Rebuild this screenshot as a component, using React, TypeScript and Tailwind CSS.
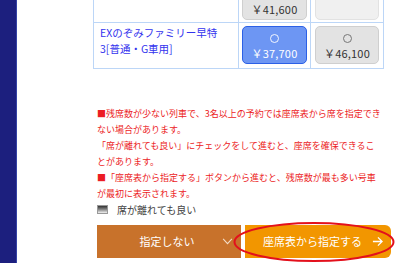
import type { ReactNode } from 'react'

function FareButton({
  price,
  variant,
}: {
  price?: string
  variant: 'selected' | 'normal' | 'empty'
}) {
  const tone =
    variant === 'selected'
      ? 'border-[#2b60e6] bg-[#6d96f3] text-white'
      : variant === 'normal'
        ? 'border-[#cfcfcf] bg-[#e3e3e3] text-[#333]'
        : 'border-[#e2e2e2] bg-[#f0f0f0] text-[#333]'

  return (
    <div
      className={`flex h-[38px] flex-col items-center justify-end rounded-[5px] border pb-[3px] ${tone}`}
    >
      {variant !== 'empty' && (
        <>
          <span
            className={`mb-[3px] h-[9px] w-[9px] rounded-full border ${
              variant === 'selected'
                ? 'border-white/90'
                : 'border-[#777]'
            }`}
          />
          <span className="text-[11px] leading-[14px] tracking-[0.2px]">
            {price}
          </span>
        </>
      )}
    </div>
  )
}

function Cell({
  children,
  className = '',
}: {
  children?: ReactNode
  className?: string
}) {
  return (
    <div
      className={`border-r border-b border-[#bcd6f7] ${className}`}
    >
      {children}
    </div>
  )
}

export default function App() {
  return (
    <div className="flex h-[263px] w-[400px] overflow-hidden bg-white font-['Noto_Sans_CJK_JP',sans-serif]">
      <aside className="w-[17px] shrink-0 border-r border-[#3543a6] bg-[#1c1f7e]" />

      <main className="flex flex-1 flex-col">
        <div className="ml-[76px] mt-[-23px] grid w-[290px] grid-cols-[145px_72px_73px] border-t border-l border-[#bcd6f7]">
          <Cell className="h-[45px]" />
          <Cell className="h-[45px] px-[3px] pt-[4px]">
            <FareButton variant="normal" price="￥41,600" />
          </Cell>
          <Cell className="h-[45px] px-[4px] pt-[4px]">
            <FareButton variant="empty" />
          </Cell>

          <Cell className="h-[46px] pl-[6px] pt-[2px] text-[10.5px] leading-4 text-[#3333ee]">
            <p>EXのぞみファミリー早特</p>
            <p>3[普通・G車用]</p>
          </Cell>
          <Cell className="h-[46px] px-[3px] pt-[3px]">
            <FareButton variant="selected" price="￥37,700" />
          </Cell>
          <Cell className="h-[46px] px-[4px] pt-[3px]">
            <FareButton variant="normal" price="￥46,100" />
          </Cell>
        </div>

        <div className="ml-[80px] mt-[37px] w-[286px] text-[9px] leading-4 text-[#ec1c24]">
          <p>■残席数が少ない列車で、3名以上の予約では座席表から席を指定できない場合があります。</p>
          <p>「席が離れても良い」にチェックをして進むと、座席を確保できることがあります。</p>
          <p>■「座席表から指定する」ボタンから進むと、残席数が最も多い号車が最初に表示されます。</p>
        </div>

        <label className="ml-[80px] mt-[1px] flex h-[12px] items-center gap-[9px] text-[10px] text-[#444]">
          <span className="h-[9px] w-[11px] border border-[#999] bg-gradient-to-b from-[#333] via-[#888] to-[#f2f2f2]" />
          席が離れても良い
        </label>

        <div className="relative ml-[80px] mt-[10px] flex h-[33px] w-[294px] gap-[4px]">
          <button
            type="button"
            className="relative flex w-[144px] items-center justify-center bg-[#c8722b] pr-[4px] text-[11px] text-white"
          >
            指定しない
            <svg
              viewBox="0 0 12 8"
              className="absolute right-[8px] top-[13px] h-[7px] w-[11px]"
              fill="none"
              stroke="#f3dcc6"
              strokeWidth="1.2"
            >
              <path d="M1 1l5 5.5L11 1" />
            </svg>
          </button>

          <button
            type="button"
            className="flex w-[146px] items-center justify-end gap-[10px] rounded-r-[6px] bg-[#f29600] pr-[8px] text-[11px] text-white"
          >
            座席表から指定する
            <svg
              viewBox="0 0 12 12"
              className="h-[11px] w-[11px]"
              fill="none"
              stroke="white"
              strokeWidth="1.4"
            >
              <path d="M1 6h10M6.5 1.5L11 6l-4.5 4.5" />
            </svg>
          </button>

          <svg
            viewBox="0 0 162 41"
            className="pointer-events-none absolute left-[136px] top-[-3px] h-[41px] w-[162px]"
            fill="none"
          >
            <ellipse
              cx="81"
              cy="20"
              rx="79.5"
              ry="19"
              stroke="#e3101c"
              strokeWidth="2"
            />
          </svg>
        </div>
      </main>
    </div>
  )
}
